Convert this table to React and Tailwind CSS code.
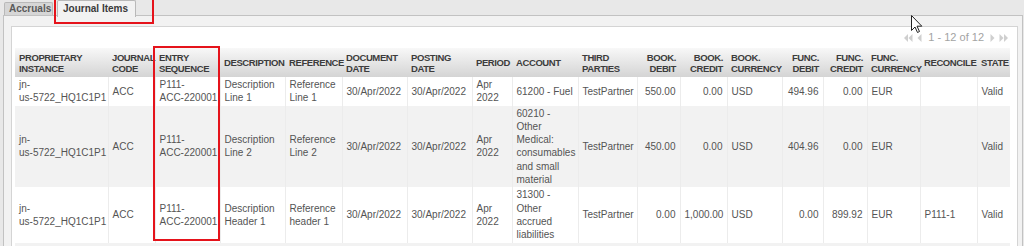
import React from 'react'

const columns = [
  { label: 'PROPRIETARY\nINSTANCE', w: 93 },
  { label: 'JOURNAL\nCODE', w: 47 },
  { label: 'ENTRY\nSEQUENCE', w: 65 },
  { label: 'DESCRIPTION', w: 65 },
  { label: 'REFERENCE', w: 57 },
  { label: 'DOCUMENT\nDATE', w: 65 },
  { label: 'POSTING\nDATE', w: 65 },
  { label: 'PERIOD', w: 40 },
  { label: 'ACCOUNT', w: 66 },
  { label: 'THIRD\nPARTIES', w: 59 },
  { label: 'BOOK.\nDEBIT', w: 43, right: true },
  { label: 'BOOK.\nCREDIT', w: 47, right: true },
  { label: 'BOOK.\nCURRENCY', w: 55 },
  { label: 'FUNC.\nDEBIT', w: 41, right: true },
  { label: 'FUNC.\nCREDIT', w: 44, right: true },
  { label: 'FUNC.\nCURRENCY', w: 53 },
  { label: 'RECONCILE', w: 57 },
  { label: 'STATE', w: 33 },
]

const rows = [
  ['jn-\nus-5722_HQ1C1P1', 'ACC', 'P111-\nACC-220001', 'Description\nLine 1', 'Reference\nLine 1', '30/Apr/2022', '30/Apr/2022', 'Apr\n2022', '61200 - Fuel', 'TestPartner', '550.00', '0.00', 'USD', '494.96', '0.00', 'EUR', '', 'Valid'],
  ['jn-\nus-5722_HQ1C1P1', 'ACC', 'P111-\nACC-220001', 'Description\nLine 2', 'Reference\nLine 2', '30/Apr/2022', '30/Apr/2022', 'Apr\n2022', '60210 -\nOther\nMedical:\nconsumables\nand small\nmaterial', 'TestPartner', '450.00', '0.00', 'USD', '404.96', '0.00', 'EUR', '', 'Valid'],
  ['jn-\nus-5722_HQ1C1P1', 'ACC', 'P111-\nACC-220001', 'Description\nHeader 1', 'Reference\nheader 1', '30/Apr/2022', '30/Apr/2022', 'Apr\n2022', '31300 -\nOther\naccrued\nliabilities', 'TestPartner', '0.00', '1,000.00', 'USD', '0.00', '899.92', 'EUR', 'P111-1', 'Valid'],
]

function PagerIcon({ dir, double }) {
  return (
    <svg width={double ? 9 : 5} height="8" viewBox={double ? '0 0 9 8' : '0 0 5 8'} className="fill-[#cfcfcf]">
      {dir === 'left' ? (
        double ? (
          <>
            <path d="M4 0 L0 4 L4 8 Z" />
            <path d="M8.5 0 L4.5 4 L8.5 8 Z" />
          </>
        ) : (
          <path d="M4.5 0 L0.5 4 L4.5 8 Z" />
        )
      ) : double ? (
        <>
          <path d="M0.5 0 L4.5 4 L0.5 8 Z" />
          <path d="M5 0 L9 4 L5 8 Z" />
        </>
      ) : (
        <path d="M0.5 0 L4.5 4 L0.5 8 Z" />
      )}
    </svg>
  )
}

function Cursor() {
  return (
    <svg width="12" height="19" viewBox="0 0 12 19" className="absolute left-[911px] top-[15px]">
      <path d="M0.5 0.5 L0.5 15.5 L4 12 L6.5 17.5 L8.5 16.5 L6 11.2 L10.8 11.2 Z" fill="#fff" stroke="#222" strokeWidth="1" strokeLinejoin="round" />
    </svg>
  )
}

export default function App() {
  return (
    <div className="relative w-[1024px] h-[246px] overflow-hidden bg-[#e8e8e8] font-['Liberation_Sans',Arial,sans-serif]">
      {/* tabs */}
      <div className="flex items-end gap-[4px] pl-[4px] h-[15px]">
        <div className="h-[13px] w-[49px] border border-b-0 border-[#b9b9b9] rounded-t-[2px] bg-[#d6d6d6] text-[10px] leading-[12px] font-bold text-[#5a5a5a] pl-[4px]">
          Accruals
        </div>
        <div className="relative z-10 -mb-[2px] h-[17px] w-[79px] border border-b-0 border-[#b9b9b9] rounded-t-[2px] bg-[#f2f2f2] text-[10px] leading-[16px] font-bold text-[#3a3a3a] pl-[5px]">
          Journal Items
        </div>
      </div>

      {/* panel */}
      <div className="ml-[3px] w-[1020px] border border-[#c2c2c2] bg-[#f2f2f2] pt-[10px] pl-[7px] pr-[4px] pb-[10px]">
        <div className="border border-[#d4d4d4] bg-white pl-[3px] pr-[7px]">
          <div className="h-[21px] flex items-center justify-end gap-[4px] pr-[2px] text-[11px] text-[#a3a3a3]">
            <PagerIcon dir="left" double />
            <PagerIcon dir="left" />
            <span className="px-[2px]">1 - 12 of 12</span>
            <PagerIcon dir="right" />
            <PagerIcon dir="right" double />
          </div>
          <table className="table-fixed border-collapse w-[995px]">
            <colgroup>
              {columns.map((c, i) => (
                <col key={i} style={{ width: c.w }} />
              ))}
            </colgroup>
            <thead>
              <tr className="bg-linear-to-b from-[#f8f8f8] to-[#d4d4d4]">
                {columns.map((c, i) => (
                  <th
                    key={i}
                    className={`h-[29px] px-[4px] align-middle whitespace-pre font-bold text-[9.5px] leading-[11px] tracking-[-0.4px] text-[#3c3c3c] ${c.right ? 'text-right' : 'text-left'}`}
                  >
                    {c.label}
                  </th>
                ))}
              </tr>
            </thead>
            <tbody>
              {rows.map((r, ri) => (
                <tr key={ri} className={ri % 2 ? 'bg-[#f2f2f2]' : 'bg-white'}>
                  {r.map((v, ci) => (
                    <td
                      key={ci}
                      className={`px-[4px] py-px align-middle whitespace-pre text-[10px] leading-[13.3px] text-[#545454] border-r border-[#ececec] last:border-r-0 ${columns[ci].right ? 'text-right' : 'text-left'}`}
                    >
                      {v}
                    </td>
                  ))}
                </tr>
              ))}
              <tr className="bg-[#f2f2f2]">
                <td colSpan={columns.length} className="h-[30px]" />
              </tr>
            </tbody>
          </table>
        </div>
      </div>

      {/* annotation boxes */}
      <div className="absolute left-[54px] top-[-4px] w-[100px] h-[28px] border-2 border-[#e5131b]" />
      <div className="absolute left-[153px] top-[46px] w-[67px] h-[195px] border-2 border-[#e5131b]" />

      <Cursor />
    </div>
  )
}
